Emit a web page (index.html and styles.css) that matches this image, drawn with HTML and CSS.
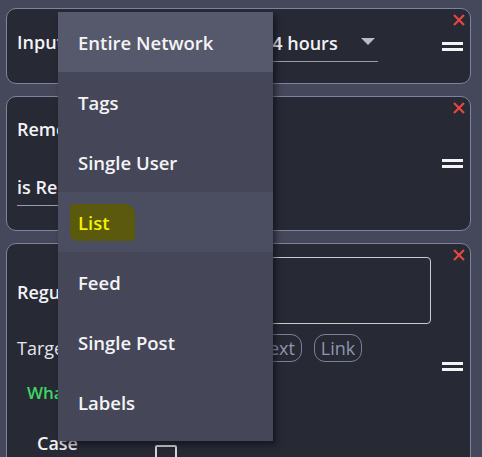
FILE: index.html
```html
<!DOCTYPE html>
<html>
<head>
<meta charset="utf-8">
<link rel="stylesheet" href="styles.css">
</head>
<body>
<div class="page">
  <div class="card card-input">
    <div class="card-body row">
      <span class="label">Input</span>
      <div class="select">
        <span class="select-text">24 hours</span>
        <span class="caret"></span>
      </div>
    </div>
    <div class="drag"><span></span><span></span></div>
    <svg class="close" viewBox="0 0 12 12" width="12" height="12"><path d="M1 1L11 11M11 1L1 11"/></svg>
  </div>

  <div class="card card-remove">
    <div class="card-body col">
      <span class="label">Remove</span>
      <div class="select wide">
        <span class="select-text">is Reply</span>
      </div>
    </div>
    <div class="drag"><span></span><span></span></div>
    <svg class="close" viewBox="0 0 12 12" width="12" height="12"><path d="M1 1L11 11M11 1L1 11"/></svg>
  </div>

  <div class="card card-regex">
    <div class="card-body col">
      <div class="row regex-row">
        <span class="label">Regular Expression</span>
        <div class="textarea"></div>
      </div>
      <div class="row target-row">
        <span class="plain">Target</span>
        <div class="chips">
          <span class="chip">Text</span>
          <span class="chip">Link</span>
        </div>
      </div>
      <div class="hint">What to match</div>
      <div class="row case-row">
        <span class="label">Case</span>
        <span class="checkbox"></span>
      </div>
    </div>
    <div class="drag"><span></span><span></span></div>
    <svg class="close" viewBox="0 0 12 12" width="12" height="12"><path d="M1 1L11 11M11 1L1 11"/></svg>
  </div>

  <ul class="menu">
    <li class="item active">Entire Network</li>
    <li class="item">Tags</li>
    <li class="item">Single User</li>
    <li class="item hover"><span class="mark">List</span></li>
    <li class="item">Feed</li>
    <li class="item">Single Post</li>
    <li class="item">Labels</li>
  </ul>
</div>
</body>
</html>
```

FILE: styles.css
```css
* { box-sizing: border-box; }
html, body {
  margin: 0;
  padding: 0;
  background: #45475a;
  height: 100%;
  overflow: hidden;
}
body {
  font-family: "Open Sans", "Noto Sans", sans-serif;
  color: #f2f2f5;
}
.page {
  position: relative;
  padding: 8px 11px 0 6px;
  display: flex;
  flex-direction: column;
  gap: 12px;
}
.card {
  position: relative;
  background: #272935;
  border: 1px solid #7d839c;
  border-radius: 10px;
  display: flex;
  align-items: center;
  padding: 0 7px 0 10px;
  flex-shrink: 0;
}
.card-body { flex: 1; align-self: flex-start; }
.row { display: flex; align-items: center; }
.col { display: flex; flex-direction: column; }
.card-input { height: 76px; }
.card-remove { height: 135px; }
.card-regex { height: 246px; align-items: flex-start; }
.card-regex .drag { margin-top: 118px; }

.label {
  font-size: 18px;
  line-height: 24px;
  font-weight: 600;
  color: #f4f4f6;
  white-space: nowrap;
}
.plain {
  font-size: 18px;
  line-height: 24px;
  font-weight: 400;
  color: #e6e6ea;
}

/* card 1 */
.card-input .card-body { padding-top: 21px; align-items: flex-start; }
.card-input .label { width: 236px; }
.select {
  position: relative;
  width: 125px;
  height: 30px;
  margin-top: 2px;
  border-bottom: 1px solid #9a9cab;
  padding: 0 0 0 9px;
  display: flex;
  align-items: flex-start;
}
.select-text {
  font-size: 18px;
  font-weight: 600;
  line-height: 24px;
  margin-top: -1px;
  white-space: nowrap;
}
.caret {
  position: absolute;
  right: 3px;
  top: 6px;
  width: 0;
  height: 0;
  border-left: 7px solid transparent;
  border-right: 7px solid transparent;
  border-top: 7px solid #b9bbc6;
}

/* card 2 */
.card-remove .card-body { padding-top: 20px; gap: 31px; }
.select.wide {
  width: 240px;
  margin-top: 0;
  padding-left: 0;
  height: 34px;
}
.select.wide .select-text { margin-top: 3px; }

/* card 3 */
.regex-row { margin-top: 13px; height: 67px; }
.regex-row .label { width: 245px; overflow: hidden; padding-top: 2px; }
.textarea {
  width: 169px;
  height: 67px;
  border: 1px solid #c9cad2;
  border-radius: 4px;
}
.target-row { margin-top: 10px; height: 28px; }
.target-row .plain { width: 235px; }
.chips { display: flex; gap: 12px; }
.chip {
  border: 1px solid #7a809a;
  border-radius: 11px;
  color: #8f95ad;
  font-size: 18px;
  line-height: 26px;
  padding: 0 6px;
}
.hint {
  margin: 19px 0 0 10px;
  color: #3dd661;
  font-size: 17px;
  line-height: 24px;
  font-weight: 600;
}
.case-row { margin: 26px 0 0 20px; align-items: flex-start; }
.case-row .label { width: 118px; }
.checkbox {
  width: 22px;
  height: 22px;
  border: 2px solid #d6d7dd;
  border-radius: 2px;
  margin-top: 14px;
}

.drag {
  display: flex;
  flex-direction: column;
  gap: 3px;
  width: 21px;
}
.drag span {
  display: block;
  height: 3px;
  background: #f3f3f5;
}
.close {
  position: absolute;
  top: 5px;
  right: 5px;
  fill: none;
  stroke: #e4483e;
  stroke-width: 2.2;
}

/* dropdown menu */
.menu {
  position: absolute;
  left: 58px;
  top: 12px;
  width: 215px;
  margin: 0;
  padding: 0 0 9px 0;
  list-style: none;
  background: #454759;
  box-shadow: 3px 4px 6px rgba(10, 10, 18, 0.55);
}
.item {
  height: 60px;
  display: flex;
  align-items: center;
  padding-left: 20px;
  font-size: 18.5px;
  font-weight: 600;
  color: #f4f4f6;
}
.item.active { background: #56586b; }
.item.hover { background: #4b4d60; }
.mark {
  display: inline-block;
  color: #f3f000;
  background: #5a590d;
  line-height: 25px;
  padding: 6px 25px 6px 8px;
  margin-left: -8px;
  border-radius: 2px 10px 4px 7px;
}
```
